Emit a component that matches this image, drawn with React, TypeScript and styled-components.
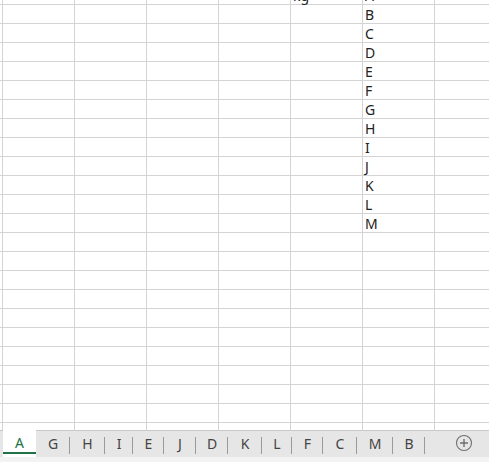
import React from "react";
import styled, { createGlobalStyle } from "styled-components";

const Global = createGlobalStyle`
  html, body { margin: 0; padding: 0; background: #fff; }
  body { font-family: "Noto Sans", "Open Sans", sans-serif; }
  * { box-sizing: border-box; }
`;

const Page = styled.div`
  width: 489px;
  height: 462px;
  display: flex;
  flex-direction: column;
  overflow: hidden;
  background: #fff;
`;

const GridArea = styled.div`
  height: 430px;
  overflow: hidden;
  flex: none;
`;

const Grid = styled.div`
  margin-top: -14px;
  display: grid;
  grid-template-columns: 3px repeat(7, 72px);
  grid-auto-rows: 19px;
`;

const Cell = styled.div`
  border-right: 1px solid #d4d4d4;
  border-bottom: 1px solid #d4d4d4;
  font-size: 14px;
  line-height: 18px;
  padding-top: 1px;
  color: #222;
  padding-left: 2px;
  white-space: nowrap;
  overflow: visible;
`;

const TabBar = styled.div`
  height: 27px;
  flex: none;
  display: flex;
  align-items: stretch;
  background: #e6e6e6;
  border-top: 1px solid #c8c8c8;
  padding-left: 3px;
  position: relative;
`;

const Tab = styled.div<{ $w: number; $active?: boolean }>`
  width: ${(p) => p.$w}px;
  flex: none;
  display: flex;
  align-items: center;
  justify-content: center;
  font-size: 14px;
  color: ${(p) => (p.$active ? "#217346" : "#444")};
  background: ${(p) => (p.$active ? "#fff" : "transparent")};
  position: relative;
  margin-top: ${(p) => (p.$active ? "-2px" : "0")};
  padding-bottom: 2px;
  &::after {
    content: "";
    position: absolute;
    right: 0;
    top: 6px;
    height: 17px;
    width: 1px;
    background: ${(p) => (p.$active ? "transparent" : "#9a9a9a")};
  }
  &::before {
    content: "";
    position: absolute;
    left: 0;
    right: 0;
    bottom: 3px;
    height: 2px;
    background: ${(p) => (p.$active ? "#217346" : "transparent")};
  }
`;

const AddButton = styled.div`
  flex: none;
  margin-left: auto;
  width: 46px;
  display: flex;
  align-items: center;
  justify-content: center;
  padding-right: 4px;
  padding-bottom: 2px;
`;

const Footer = styled.div`
  flex: 1;
  background: #f3f3f3;
`;

const letters = ["", "A", "B", "C", "D", "E", "F", "G", "H", "I", "J", "K", "L", "M"];

const tabs: { l: string; w: number }[] = [
  { l: "A", w: 33 },
  { l: "G", w: 34 },
  { l: "H", w: 35 },
  { l: "I", w: 28 },
  { l: "E", w: 31 },
  { l: "J", w: 32 },
  { l: "D", w: 32 },
  { l: "K", w: 34 },
  { l: "L", w: 30 },
  { l: "F", w: 31 },
  { l: "C", w: 34 },
  { l: "M", w: 36 },
  { l: "B", w: 32 },
];

export default function App() {
  const rows = 24;
  return (
    <Page>
      <Global />
      <GridArea>
        <Grid>
          {Array.from({ length: rows }).map((_, r) =>
            Array.from({ length: 8 }).map((__, c) => {
              let content = "";
              if (c === 6 && r >= 0 && r <= 12) content = letters[r + 1];
              if (c === 5 && r === 0) content = "kg";
              return <Cell key={`${r}-${c}`}>{content}</Cell>;
            })
          )}
        </Grid>
      </GridArea>
      <TabBar>
        {tabs.map((t, i) => (
          <Tab key={t.l} $w={t.w} $active={i === 0}>
            {t.l}
          </Tab>
        ))}
        <AddButton>
          <svg width="18" height="18" viewBox="0 0 18 18">
            <circle cx="9" cy="9" r="7.5" fill="none" stroke="#6f6f6f" strokeWidth="1.1" />
            <path d="M9 5v8M5 9h8" stroke="#6f6f6f" strokeWidth="1.4" />
          </svg>
        </AddButton>
      </TabBar>
      <Footer />
    </Page>
  );
}
